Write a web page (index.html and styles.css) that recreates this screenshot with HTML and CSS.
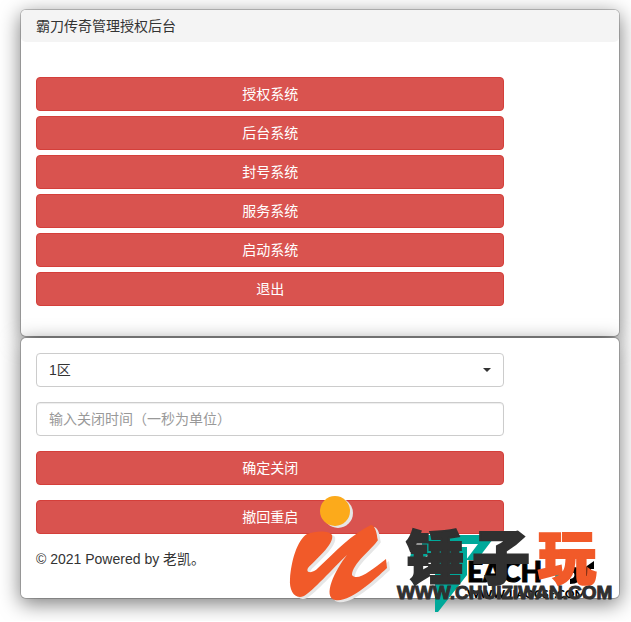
FILE: index.html
```html
<!DOCTYPE html>
<html lang="zh-CN">
<head>
<meta charset="utf-8">
<title>霸刀传奇管理授权后台</title>
<link rel="stylesheet" href="styles.css">
</head>
<body>
<main class="page">
  <section class="panel">
    <header class="panel-header">霸刀传奇管理授权后台</header>
    <nav class="menu">
      <button class="btn" type="button">授权系统</button>
      <button class="btn" type="button">后台系统</button>
      <button class="btn" type="button">封号系统</button>
      <button class="btn" type="button">服务系统</button>
      <button class="btn" type="button">启动系统</button>
      <button class="btn" type="button">退出</button>
    </nav>
  </section>
  <section class="panel">
    <form class="shutdown">
      <div class="select-wrap">
        <select class="field" aria-label="选择区服"><option>1区</option></select>
        <svg class="caret" viewBox="0 0 8 4" aria-hidden="true"><path d="M0 0h8L4 4z"/></svg>
      </div>
      <input class="field" type="text" aria-label="关闭时间" placeholder="输入关闭时间（一秒为单位）">
      <button class="btn" type="button">确定关闭</button>
      <button class="btn" type="button">撤回重启</button>
    </form>
    <footer class="copyright">© 2021 Powered by 老凯。</footer>
  </section>
  <svg class="watermark" viewBox="0 0 340 130" aria-hidden="true">
    <path class="teal" d="M142 50H216L197 75H186L198 59H163L145 72H130L133 61H142ZM155 62H187V90L158 127H155Z"/>
    <circle class="teal" cx="279" cy="90" r="4"/>
    <text class="wm-each" x="187" y="97">EACH</text>
    <path d="M292 82q9-1 9 8t-11 9v-5q6-1 4-6l-4-1zM304 83l10-7v8h-3v8l-5 6h-6z"/>
    <text class="wm-small" x="187" y="113">WWW.JIAOCSF.COM</text>
    <g>
      <g class="mark-shadow" transform="translate(3 2)">
        <circle cx="55" cy="26" r="15"/>
        <path d="M27 49C35 46 49 45 52 50C55 59 34 76 28 83C25 89 34 88 38 83C56 66 72 49 91 40C97 41 97 54 98 55C92 64 72 79 72 90C77 97 92 85 106 74L107 83C94 95 70 118 55 115C42 112 55 85 67 70C53 83 32 107 24 111C15 115 9 106 10 94C11 77 17 55 27 49Z"/>
      </g>
      <circle class="dot" cx="55" cy="26" r="15"/>
      <path class="orange" d="M27 49C35 46 49 45 52 50C55 59 34 76 28 83C25 89 34 88 38 83C56 66 72 49 91 40C97 41 97 54 98 55C92 64 72 79 72 90C77 97 92 85 106 74L107 83C94 95 70 118 55 115C42 112 55 85 67 70C53 83 32 107 24 111C15 115 9 106 10 94C11 77 17 55 27 49Z"/>
    </g>
    <text class="wm-title" x="126" y="94">锤</text>
    <text class="wm-title" x="192" y="94">子</text>
    <text class="wm-title wm-orange" x="258" y="94">玩</text>
    <text class="wm-url" x="117" y="114">WWW.CHUIZIWAN.COM</text>
  </svg>
</main>
</body>
</html>
```

FILE: styles.css
```css
* { box-sizing: border-box; }
body {
  margin: 0;
  background: #fff;
  color: #333;
  font: 14px/20px "Liberation Sans", "Noto Sans CJK SC", sans-serif;
}
.page {
  position: relative;
  margin: 9px 11px 22px 20px;
}
.panel {
  background: #fff;
  background-clip: padding-box;
  border: 1px solid rgba(0, 0, 0, .2);
  border-radius: 6px;
  box-shadow: 0 5px 20px rgba(0, 0, 0, .5);
}
.panel-header {
  padding: 6px 15px;
  background: #f4f4f4;
  border-radius: 5px;
}
.menu, .shutdown {
  display: flex;
  flex-direction: column;
  width: 83.3333%;
}
.menu { gap: 5px; padding: 35px 15px 30px; }
.shutdown { gap: 15px; padding: 15px; }
.btn, .field {
  width: 100%;
  height: 34px;
  padding: 6px 12px;
  border-radius: 4px;
  font: inherit;
}
.btn {
  background: #d9534f;
  border: 1px solid #d43f3a;
  color: #fff;
}
.field {
  display: block;
  appearance: none;
  background: #fff;
  border: 1px solid #ccc;
  color: #333;
}
input.field { box-shadow: inset 0 1px 1px rgba(0, 0, 0, .075); }
.field::placeholder { color: #999; opacity: 1; }
.select-wrap { position: relative; }
.caret {
  position: absolute;
  top: 15px;
  right: 13px;
  width: 8px;
  height: 4px;
  fill: #333;
  pointer-events: none;
}
.copyright { padding: 0 15px 29px; }
.watermark {
  position: absolute;
  right: 0;
  bottom: -16px;
  width: 340px;
  height: 130px;
  pointer-events: none;
}
.teal { fill: #00a99a; }
.dot { fill: #fcaa1b; }
.orange { fill: #f15a29; }
.mark-shadow { fill: #e6e6e6; }
.wm-each { font: 900 28px Lato, sans-serif; fill: #000; stroke: #000; stroke-width: 1px; }
.wm-small { font: 900 12px Lato, sans-serif; fill: #000; }
.wm-title {
  font: 900 58px "Noto Sans CJK SC", sans-serif;
  font-style: oblique 8deg;
  fill: #303030;
  stroke: #303030;
  stroke-width: 2px;
}
.wm-orange { fill: #f15a29; stroke: #f15a29; }
.wm-url {
  font: 700 19px "Liberation Sans", sans-serif;
  fill: #303030;
  stroke: #303030;
  stroke-width: 1px;
}
```
